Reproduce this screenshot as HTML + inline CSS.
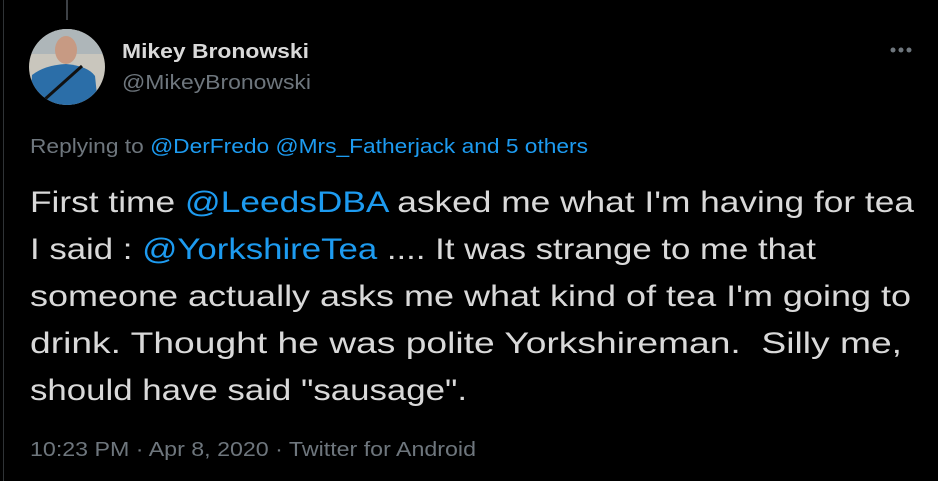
<!DOCTYPE html>
<html><head><style>
html,body{margin:0;padding:0;background:#000;width:938px;height:481px;overflow:hidden}
svg{display:block}
text{font-family:"Liberation Sans",sans-serif}
</style></head><body>
<svg width="938" height="481" viewBox="0 0 938 481" xmlns="http://www.w3.org/2000/svg">
<rect width="938" height="481" fill="#000"/>
<rect x="3" y="0" width="1" height="481" fill="#2f3336"/>
<rect x="66" y="0" width="2" height="20" fill="#3d4146"/>
<defs><clipPath id="c"><circle cx="67" cy="67" r="38"/></clipPath></defs>
<g clip-path="url(#c)">
<rect x="29" y="29" width="76" height="76" fill="#c9c6bd"/>
<rect x="29" y="29" width="76" height="25" fill="#aeb6b9"/>
<ellipse cx="66" cy="50" rx="11" ry="14" fill="#c79a83"/>
<path d="M30 105 L32 75 Q45 65 66 64 Q88 66 95 76 L98 105 Z" fill="#2b6ea8"/>
<path d="M44 100 L82 66" stroke="#111" stroke-width="3"/>
</g>
<text x="122" y="58" fill="#d9d9d9" font-size="20" font-weight="bold" textLength="187" lengthAdjust="spacingAndGlyphs">Mikey Bronowski</text>
<text x="122" y="89" fill="#6e767d" font-size="20" textLength="189" lengthAdjust="spacingAndGlyphs">@MikeyBronowski</text>
<circle cx="893" cy="50" r="2.5" fill="#6e767d"/><circle cx="901" cy="50" r="2.5" fill="#6e767d"/><circle cx="909" cy="50" r="2.5" fill="#6e767d"/>
<text x="30" y="153" font-size="20" fill="#6e767d" textLength="558" lengthAdjust="spacingAndGlyphs">Replying to <tspan fill="#1d9bf0">@DerFredo @Mrs_Fatherjack and 5 others</tspan></text>
<g font-size="30" fill="#d9d9d9">
<text x="30" y="212" textLength="884" lengthAdjust="spacingAndGlyphs">First time <tspan fill="#1d9bf0">@LeedsDBA</tspan> asked me what I'm having for tea</text>
<text x="30" y="259" textLength="786" lengthAdjust="spacingAndGlyphs">I said : <tspan fill="#1d9bf0">@YorkshireTea</tspan> .... It was strange to me that</text>
<text x="30" y="306" textLength="881" lengthAdjust="spacingAndGlyphs">someone actually asks me what kind of tea I'm going to</text>
<text x="30" y="353" textLength="872" lengthAdjust="spacingAndGlyphs" xml:space="preserve">drink. Thought he was polite Yorkshireman.  Silly me,</text>
<text x="30" y="400" textLength="437" lengthAdjust="spacingAndGlyphs">should have said "sausage".</text>
</g>
<text x="30" y="456" font-size="20" fill="#6e767d" textLength="446" lengthAdjust="spacingAndGlyphs">10:23 PM · Apr 8, 2020 · Twitter for Android</text>
</svg>
</body></html>
